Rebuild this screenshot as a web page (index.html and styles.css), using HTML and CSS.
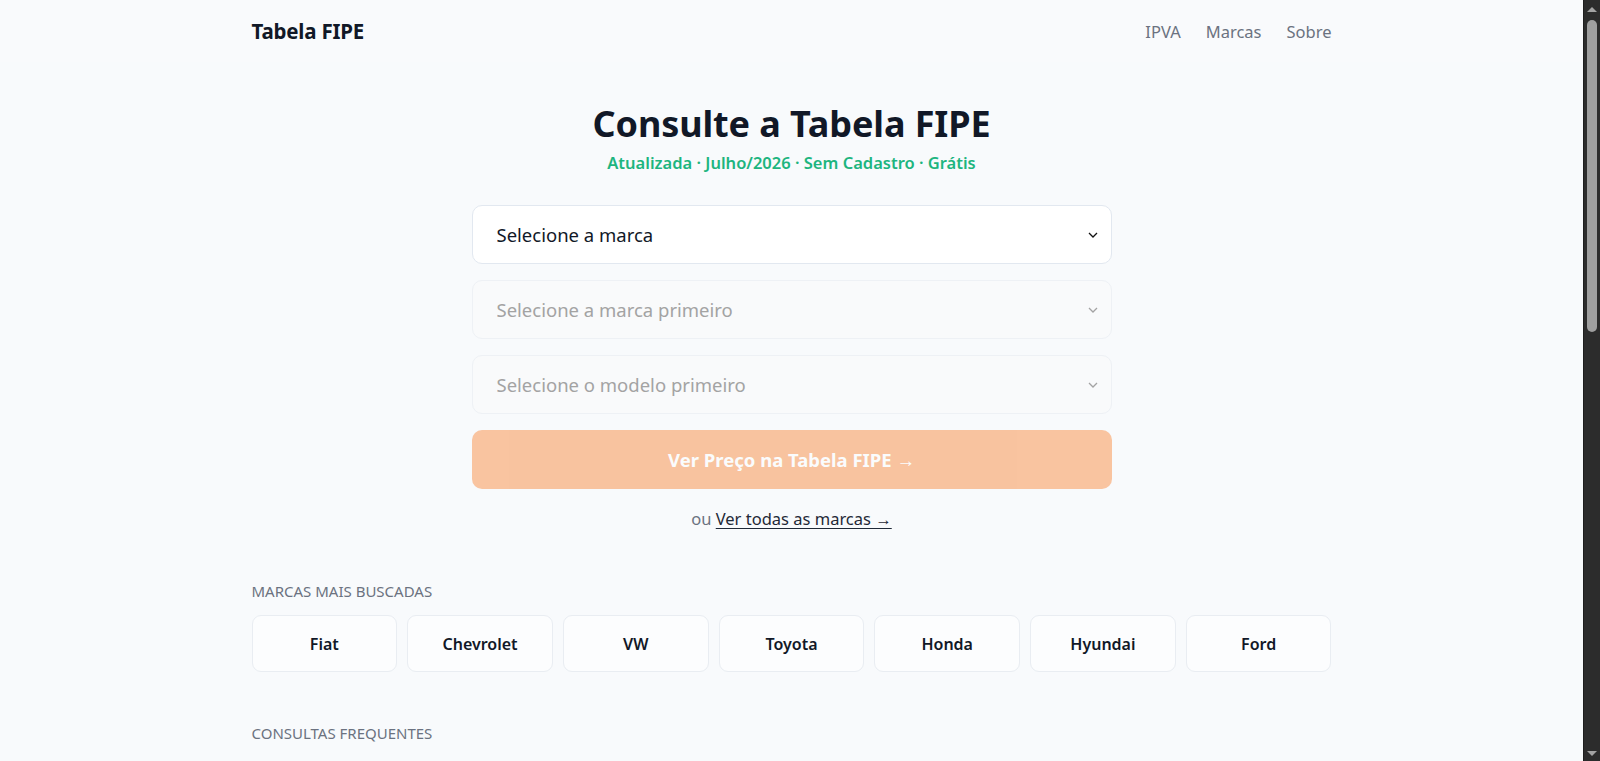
FILE: index.html
```html
<!DOCTYPE html>
<html lang="pt-BR">
<head>
<meta charset="utf-8">
<title>Tabela FIPE</title>
<link rel="stylesheet" href="styles.css">
</head>
<body>
<header class="site-header">
  <div class="container header-inner">
    <a class="logo" href="#">Tabela FIPE</a>
    <nav class="nav">
      <a href="#">IPVA</a>
      <a href="#">Marcas</a>
      <a href="#">Sobre</a>
    </nav>
  </div>
</header>
<main class="container">
  <section class="hero">
    <h1 class="title">Consulte a Tabela FIPE</h1>
    <p class="subtitle">Atualizada · Julho/2026 · Sem Cadastro · Grátis</p>
    <form class="search-form">
      <div class="select-wrap">
        <select class="field">
          <option>Selecione a marca</option>
        </select>
        <svg class="chevron" viewBox="0 0 10 6" width="10" height="6"><path d="M1 1l4 4 4-4" fill="none" stroke="#111" stroke-width="1.3"/></svg>
      </div>
      <div class="select-wrap">
        <select class="field" disabled>
          <option>Selecione a marca primeiro</option>
        </select>
        <svg class="chevron" viewBox="0 0 10 6" width="10" height="6"><path d="M1 1l4 4 4-4" fill="none" stroke="#a3a3a3" stroke-width="1.3"/></svg>
      </div>
      <div class="select-wrap">
        <select class="field" disabled>
          <option>Selecione o modelo primeiro</option>
        </select>
        <svg class="chevron" viewBox="0 0 10 6" width="10" height="6"><path d="M1 1l4 4 4-4" fill="none" stroke="#a3a3a3" stroke-width="1.3"/></svg>
      </div>
      <button class="submit" type="button" disabled>Ver Preço na Tabela FIPE →</button>
    </form>
    <p class="all-brands">ou <a href="#">Ver todas as marcas →</a></p>
  </section>

  <section class="section">
    <h2 class="section-label">Marcas mais buscadas</h2>
    <div class="brand-grid">
      <a class="brand" href="#">Fiat</a>
      <a class="brand" href="#">Chevrolet</a>
      <a class="brand" href="#">VW</a>
      <a class="brand" href="#">Toyota</a>
      <a class="brand" href="#">Honda</a>
      <a class="brand" href="#">Hyundai</a>
      <a class="brand" href="#">Ford</a>
    </div>
  </section>

  <section class="section section-freq">
    <h2 class="section-label">Consultas frequentes</h2>
  </section>
</main>
<div class="fake-scrollbar" aria-hidden="true">
  <span class="sb-arrow sb-up"></span>
  <span class="sb-thumb"></span>
  <span class="sb-arrow sb-down"></span>
</div>
</body>
</html>
```

FILE: styles.css
```css
* { box-sizing: border-box; }

html, body {
  margin: 0;
  padding: 0;
  background: #f8fafc;
  color: #0f172a;
  font-family: "Noto Sans", "Open Sans", Arial, sans-serif;
}

body {
  padding-right: 17px;
  min-height: 1200px;
}

a { color: inherit; text-decoration: none; }

.container {
  max-width: 1080px;
  margin: 0 auto;
}

.site-header {
  background: #f9fafc;
}

.header-inner {
  height: 62px;
  display: flex;
  align-items: center;
  justify-content: space-between;
}

.logo {
  font-size: 20.5px;
  font-weight: 700;
  color: #111827;
  letter-spacing: -0.2px;
}

.nav {
  display: flex;
  gap: 25px;
  font-size: 16.5px;
  color: #6b7280;
}

.hero {
  display: flex;
  flex-direction: column;
  align-items: center;
  padding-top: 40px;
}

.title {
  margin: 0;
  font-size: 36px;
  line-height: 44px;
  font-weight: 700;
  color: #111827;
  letter-spacing: -0.1px;
}

.subtitle {
  margin: 5px 0 0;
  font-size: 16.5px;
  line-height: 24px;
  font-weight: 600;
  color: #1db57f;
}

.search-form {
  width: 640px;
  margin-top: 30px;
  display: flex;
  flex-direction: column;
  gap: 16px;
}

.select-wrap {
  position: relative;
}

.field {
  width: 100%;
  height: 59px;
  padding: 0 40px 0 24px;
  border: 1px solid #e2e8f0;
  border-radius: 10px;
  background: #ffffff;
  font-family: inherit;
  font-size: 18.5px;
  color: #111827;
  appearance: none;
  -webkit-appearance: none;
  outline: none;
}

.field:disabled {
  background: #f9fafb;
  border-color: #eef1f5;
  color: #a3a3a3;
  opacity: 1;
}

.chevron {
  position: absolute;
  right: 14px;
  top: 27px;
  pointer-events: none;
}

.submit {
  height: 59px;
  border: 0;
  border-radius: 10px;
  background: #f97316;
  opacity: 0.4;
  color: #ffffff;
  font-family: inherit;
  font-size: 18.5px;
  font-weight: 700;
}

.all-brands {
  margin: 18px 0 0;
  font-size: 16.5px;
  line-height: 24px;
  color: #6b7280;
}

.all-brands a {
  color: #1f2937;
  text-decoration: underline;
  text-underline-offset: 3px;
}

.section {
  margin-top: 50px;
}

.section-freq {
  margin-top: 51px;
}

.section-label {
  margin: 0;
  font-size: 15px;
  line-height: 20px;
  font-weight: 400;
  color: #6b7280;
  text-transform: uppercase;
}

.brand-grid {
  margin-top: 14px;
  display: grid;
  grid-template-columns: repeat(7, 1fr);
  gap: 10px;
}

.brand {
  height: 57px;
  display: flex;
  align-items: center;
  justify-content: center;
  background: #fcfdfe;
  border: 1px solid #e9edf2;
  border-radius: 9px;
  font-size: 16px;
  font-weight: 600;
  color: #111827;
}

/* simulated dark OS scrollbar */
.fake-scrollbar {
  position: fixed;
  top: 0;
  right: 0;
  bottom: 0;
  width: 17px;
  background: #2c2c2c;
  border-left: 1px solid #1e1e1e;
}

.sb-thumb {
  position: absolute;
  top: 20px;
  left: 3px;
  width: 10px;
  height: 312px;
  background: #9f9f9f;
  border-radius: 5px;
}

.sb-arrow {
  position: absolute;
  left: 3px;
  width: 0;
  height: 0;
  border-left: 5px solid transparent;
  border-right: 5px solid transparent;
}

.sb-up {
  top: 7px;
  border-bottom: 5px solid #a3a3a3;
}

.sb-down {
  bottom: 5px;
  border-top: 5px solid #a3a3a3;
}
```
